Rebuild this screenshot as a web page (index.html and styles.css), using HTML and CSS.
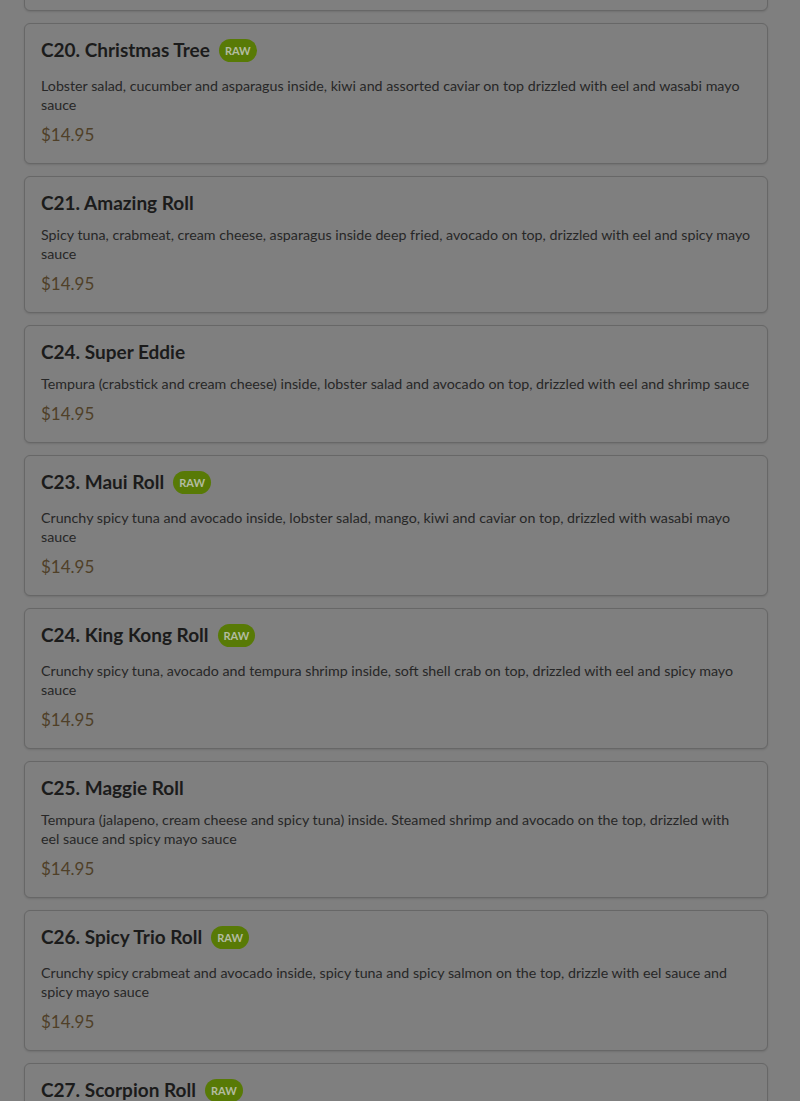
FILE: index.html
```html
<!DOCTYPE html>
<html lang="en">
<head>
<meta charset="utf-8">
<title>Menu</title>
<link rel="stylesheet" href="styles.css">
</head>
<body>
<main class="list">
  <article class="card card-prev">
    <div class="price">$14.95</div>
  </article>
  <article class="card">
    <div class="head"><h3 class="title">C20. Christmas Tree</h3><span class="badge">RAW</span></div>
    <p class="desc">Lobster salad, cucumber and asparagus inside, kiwi and assorted caviar on top drizzled with eel and wasabi mayo sauce</p>
    <div class="price">$14.95</div>
  </article>
  <article class="card">
    <div class="head"><h3 class="title">C21. Amazing Roll</h3></div>
    <p class="desc">Spicy tuna, crabmeat, cream cheese, asparagus inside deep fried, avocado on top, drizzled with eel and spicy mayo sauce</p>
    <div class="price">$14.95</div>
  </article>
  <article class="card">
    <div class="head"><h3 class="title">C24. Super Eddie</h3></div>
    <p class="desc">Tempura (crabstick and cream cheese) inside, lobster salad and avocado on top, drizzled with eel and shrimp sauce</p>
    <div class="price">$14.95</div>
  </article>
  <article class="card">
    <div class="head"><h3 class="title">C23. Maui Roll</h3><span class="badge">RAW</span></div>
    <p class="desc">Crunchy spicy tuna and avocado inside, lobster salad, mango, kiwi and caviar on top, drizzled with wasabi mayo sauce</p>
    <div class="price">$14.95</div>
  </article>
  <article class="card">
    <div class="head"><h3 class="title">C24. King Kong Roll</h3><span class="badge">RAW</span></div>
    <p class="desc">Crunchy spicy tuna, avocado and tempura shrimp inside, soft shell crab on top, drizzled with eel and spicy mayo sauce</p>
    <div class="price">$14.95</div>
  </article>
  <article class="card">
    <div class="head"><h3 class="title">C25. Maggie Roll</h3></div>
    <p class="desc">Tempura (jalapeno, cream cheese and spicy tuna) inside. Steamed shrimp and avocado on the top, drizzled with eel sauce and spicy mayo sauce</p>
    <div class="price">$14.95</div>
  </article>
  <article class="card">
    <div class="head"><h3 class="title">C26. Spicy Trio Roll</h3><span class="badge">RAW</span></div>
    <p class="desc">Crunchy spicy crabmeat and avocado inside, spicy tuna and spicy salmon on the top, drizzle with eel sauce and spicy mayo sauce</p>
    <div class="price">$14.95</div>
  </article>
  <article class="card">
    <div class="head"><h3 class="title">C27. Scorpion Roll</h3><span class="badge">RAW</span></div>
    <p class="desc">Shrimp tempura and cucumber inside, eel and avocado on top, drizzled with eel sauce</p>
    <div class="price">$14.95</div>
  </article>
</main>
</body>
</html>
```
FILE: styles.css
```css
html, body {
  margin: 0;
  padding: 0;
  background: #7f7f7f;
}
body {
  font-family: "Lato", "Open Sans", sans-serif;
  color: #222;
  height: 1101px;
  overflow: hidden;
}
.list {
  display: flex;
  flex-direction: column;
  gap: 12px;
  margin: -47px 32px 0 24px;
}
.card {
  background: #7f7f7f;
  border: 1px solid #676767;
  border-radius: 6px;
  padding: 16px;
  box-shadow: 0 1px 2px rgba(0,0,0,0.12);
  display: flex;
  flex-direction: column;
}
.head {
  display: flex;
  align-items: flex-start;
  gap: 9px;
  min-height: 20px;
}
.title {
  margin: 0;
  font-size: 19px;
  line-height: 20px;
  font-weight: 700;
  color: #1b1b1b;
}
.badge {
  background: #587a06;
  color: #b3bca0;
  font-size: 11px;
  font-weight: 700;
  line-height: 23px;
  height: 23px;
  padding: 0 6px;
  margin: -1px 0 2px;
  border-radius: 12px;
}
.desc {
  margin: 12px 0 0;
  font-size: 14.25px;
  line-height: 19px;
  color: #272727;
}
.price {
  margin-top: 9px;
  font-size: 17px;
  line-height: 24px;
  color: #4f4028;
}
.card-prev .price {
  margin-top: 0;
}
```
